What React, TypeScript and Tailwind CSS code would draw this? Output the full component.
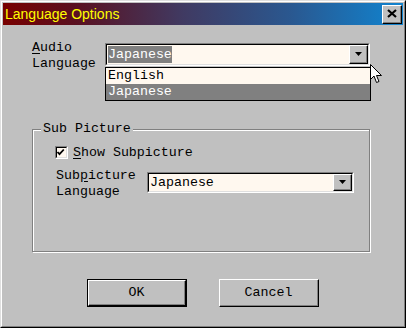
import React from 'react';

const mono = "font-['Liberation_Mono','DejaVu_Sans_Mono',monospace] text-[13.3px] text-black";

function DropArrow({ className = '' }: { className?: string }) {
  return (
    <div className={`flex items-center justify-center bg-[#c0c0c0] border border-t-white border-l-white border-r-black border-b-black ${className}`}>
      <div className="w-full h-full flex items-center justify-center border-r border-b border-r-[#808080] border-b-[#808080]">
        <svg width="7" height="4" viewBox="0 0 7 4"><path d="M0 0h7L3.5 4z" fill="#000" /></svg>
      </div>
    </div>
  );
}

function Sunken({ className = '', children }: { className?: string; children: React.ReactNode }) {
  return (
    <div className={`border border-t-[#808080] border-l-[#808080] border-r-white border-b-white ${className}`}>
      <div className="w-full h-full border border-t-black border-l-black border-r-[#dfdfdf] border-b-[#dfdfdf] bg-[#fff8ef] flex items-center">
        {children}
      </div>
    </div>
  );
}

function WinButton({ label, primary }: { label: string; primary?: boolean }) {
  const inner = (
    <div className="w-full h-full border border-t-white border-l-white border-r-black border-b-black">
      <div className="w-full h-full border-r border-b border-r-[#808080] border-b-[#808080] flex items-center justify-center">
        <span className={mono}>{label}</span>
      </div>
    </div>
  );
  return primary ? (
    <div className="w-[100px] h-[28px] border border-black">{inner}</div>
  ) : (
    <div className="w-[100px] h-[28px]">{inner}</div>
  );
}

export default function App() {
  return (
    <div className="w-[406px] h-[328px] bg-[#c0c0c0] border border-t-[#dfdfdf] border-l-[#dfdfdf] border-r-black border-b-black">
      <div className="h-full border border-t-white border-l-white border-r-[#808080] border-b-[#808080] p-px flex flex-col">
        {/* Title bar */}
        <div className="h-[22px] flex items-center justify-between pl-[2px] pr-[1px] bg-[linear-gradient(to_right,#780000,#5a1020_18%,#403a62_45%,#2a5890_72%,#1084d0)]">
          <span className="font-['Liberation_Sans',Arial,sans-serif] text-[14px] text-[#ffff00] leading-none">Language Options</span>
          <div className="w-[20px] h-[19px] bg-[#c0c0c0] border border-t-white border-l-white border-r-black border-b-black">
            <div className="w-full h-full border-r border-b border-r-[#808080] border-b-[#808080] flex items-center justify-center">
              <svg width="10" height="9" viewBox="0 0 10 9">
                <path d="M1 1L9 8M9 1L1 8" stroke="#000" strokeWidth="2.2" />
              </svg>
            </div>
          </div>
        </div>

        {/* Body */}
        <div className="flex-1 flex flex-col pl-[29px] pt-[15px]">
          <div className="flex items-start">
            <div className={`${mono} w-[73px] leading-[16px]`}>
              <div><span className="underline underline-offset-2">A</span>udio</div>
              <div>Language</div>
            </div>
            <div className="relative mt-[3px]">
              <Sunken className="w-[265px] h-[23px]">
                <span className={`${mono} ml-px bg-[#808080] text-white leading-[17px]`}>Japanese</span>
                <DropArrow className="ml-auto w-[19px] h-[19px]" />
              </Sunken>
              <div className="absolute left-0 top-[24px] w-[266px] border border-black bg-[#fff8ef]">
                <div className={`${mono} h-[16px] leading-[16px] pl-[2px]`}>English</div>
                <div className={`${mono} h-[16px] leading-[16px] pl-[2px] bg-[#808080] text-white`}>Japanese</div>
              </div>
              <svg className="absolute left-[265px] top-[21px]" width="13" height="20" viewBox="0 0 13 20">
                <path d="M0.5 0.5V15.5L4 12L6.5 18.5L9 17.5L6.5 11.5H11.5Z" fill="#fff" stroke="#000" strokeWidth="1" />
              </svg>
            </div>
          </div>

          {/* Sub Picture group */}
          <div className="relative mt-[57px] w-[338px] h-[123px] border border-[#808080] shadow-[inset_1px_1px_0_#fff,1px_1px_0_#fff] pt-[16px] pl-[22px]">
            <span className={`${mono} absolute -top-[9px] left-[8px] px-[2px] bg-[#c0c0c0] leading-[16px]`}>Sub Picture</span>
            <div className="flex items-center h-[13px]">
              <Sunken className="w-[13px] h-[13px]">
                <svg width="9" height="9" viewBox="0 0 9 9" className="-ml-px">
                  <path d="M1.5 4L3.5 6.2L7.8 1.5" stroke="#000" strokeWidth="1.8" fill="none" />
                </svg>
              </Sunken>
              <span className={`${mono} ml-[5px] leading-[16px]`}>
                <span className="underline underline-offset-2">S</span>how Subpicture
              </span>
            </div>
            <div className="flex items-start mt-[9px] ml-px">
              <div className={`${mono} w-[91px] leading-[16px]`}>
                <div>Sub<span className="underline underline-offset-2">p</span>icture</div>
                <div>Language</div>
              </div>
              <Sunken className="w-[207px] h-[21px] mt-[4px]">
                <span className={`${mono} ml-[1px] leading-[17px]`}>Japanese</span>
                <DropArrow className="ml-auto w-[19px] h-[17px]" />
              </Sunken>
            </div>
          </div>

          {/* Buttons */}
          <div className="flex mt-[27px] ml-[55px] gap-[32px]">
            <WinButton label="OK" primary />
            <WinButton label="Cancel" />
          </div>
        </div>
      </div>
    </div>
  );
}
